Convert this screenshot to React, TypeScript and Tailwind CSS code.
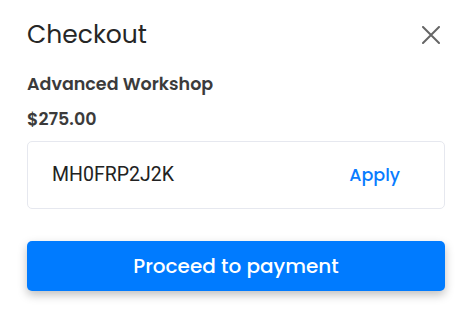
export default function App() {
  return (
    <div className="min-h-screen bg-white font-['Poppins','Noto_Sans',sans-serif]">
      <div className="w-[472px] px-[27px] pt-[19px]">
        <div className="flex items-center justify-between">
          <h1 className="text-[25px] leading-[32px] font-normal text-[#262626]">Checkout</h1>
          <button type="button" className="mr-[5px] text-[#666666]">
            <svg width="18" height="18" viewBox="0 0 18 18" fill="none" stroke="currentColor" strokeWidth="2" strokeLinecap="round">
              <path d="M1 1l16 16M17 1L1 17" />
            </svg>
          </button>
        </div>

        <h2 className="mt-[20px] text-[17.5px] leading-[26px] font-semibold text-[#3b3b3b]">Advanced Workshop</h2>
        <div className="mt-[9px] text-[17.5px] leading-[26px] font-semibold text-[#3b3b3b]">$275.00</div>

        <div className="mt-[9px] flex h-[68px] items-center justify-between rounded-[5px] border border-[#e6e8ef] pl-[24px] pr-[44px]">
          <span className="font-['Roboto',sans-serif] text-[19.5px] text-[#222222]">MH0FRP2J2K</span>
          <button type="button" className="text-[17.5px] font-medium text-[#0a7cff]">
            Apply
          </button>
        </div>

        <button
          type="button"
          className="mt-[32px] flex h-[50px] w-full items-center justify-center rounded-[5px] bg-[#007bff] text-[20px] font-medium text-white shadow-[0_4px_10px_rgba(0,0,0,0.25)]"
        >
          Proceed to payment
        </button>
      </div>
    </div>
  );
}
